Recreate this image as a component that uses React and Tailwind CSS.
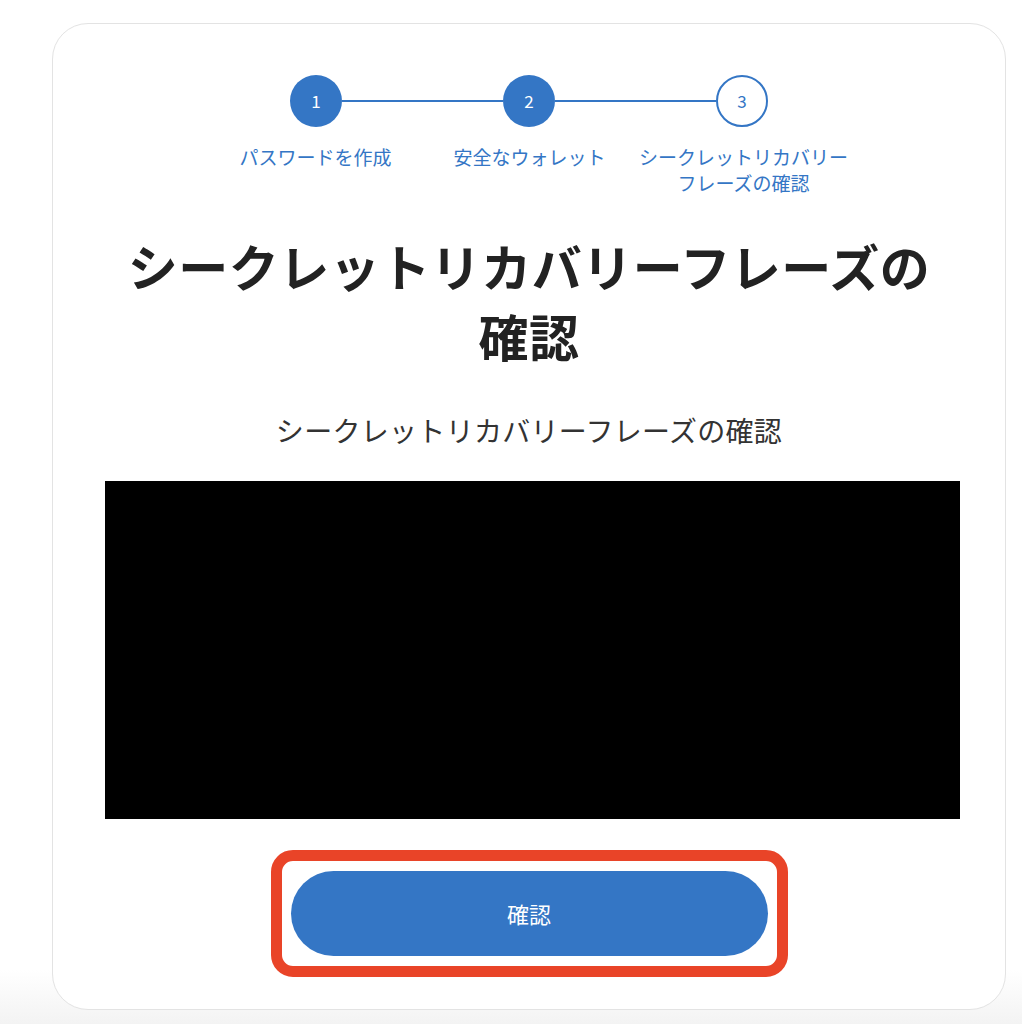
export default function App() {
  const font = { fontFamily: '"Noto Sans CJK JP", "Noto Sans", sans-serif' };
  const steps = [
    { n: "1", label: "パスワードを作成", done: true },
    { n: "2", label: "安全なウォレット", done: true },
    { n: "3", label: "シークレットリカバリーフレーズの確認", done: false },
  ];
  return (
    <div
      className="w-[1022px] h-[1024px] overflow-hidden bg-[linear-gradient(to_bottom,#ffffff_970px,#f3f3f3_1024px)] pt-[23px]"
      style={font}
    >
      <div className="ml-[52px] w-[954px] h-[987px] bg-white border border-[#e3e3e3] rounded-[36px] flex flex-col items-center pt-[51px]">
        {/* Stepper circles */}
        <div className="flex items-center">
          {steps.map((s, i) => (
            <div key={s.n} className="flex items-center">
              <div
                className={
                  s.done
                    ? "w-[52px] h-[52px] rounded-full bg-[#3476c5] text-white flex items-center justify-center text-[17px]"
                    : "w-[52px] h-[52px] rounded-full bg-white border-2 border-[#3476c5] text-[#3476c5] flex items-center justify-center text-[17px]"
                }
              >
                {s.n}
              </div>
              {i < 2 && <div className="w-[161px] h-[2px] bg-[#3476c5]" />}
            </div>
          ))}
        </div>
        {/* Stepper labels */}
        <div className="grid grid-cols-[214px_214px_214px] mt-[17px] ml-[1px]">
          {steps.map((s) => (
            <div key={s.n} className="text-center text-[19px] leading-[26px] text-[#3476c5] px-[2px]">
              {s.label}
            </div>
          ))}
        </div>
        {/* Heading */}
        <h1 className="mt-[34px] max-w-[840px] text-center text-[50px] leading-[70px] font-bold tracking-[0.5px] text-[#222222]">
          シークレットリカバリーフレーズの確認
        </h1>
        <p className="mt-[40px] text-[28px] leading-[40px] text-[#333333] tracking-[0.3px]">
          シークレットリカバリーフレーズの確認
        </p>
        <div className="self-start ml-[52px] mt-[31px] w-[855px] h-[338px] bg-black" />
        <div className="mt-[31px] border-[11px] border-[#e94428] rounded-[22px] px-[9px] py-[10px] bg-white">
          <button className="w-[477px] h-[85px] rounded-full bg-[#3476c5] text-white text-[22px] flex items-center justify-center">
            確認
          </button>
        </div>
      </div>
    </div>
  );
}
